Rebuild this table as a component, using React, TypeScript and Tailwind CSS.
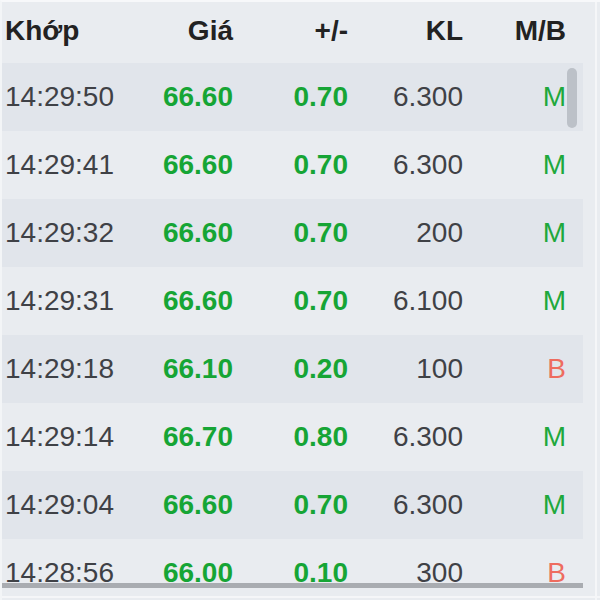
import React from 'react'

interface Trade {
  time: string
  price: string
  change: string
  volume: string
  side: 'M' | 'B'
}

const trades: Trade[] = [
  { time: '14:29:50', price: '66.60', change: '0.70', volume: '6.300', side: 'M' },
  { time: '14:29:41', price: '66.60', change: '0.70', volume: '6.300', side: 'M' },
  { time: '14:29:32', price: '66.60', change: '0.70', volume: '200', side: 'M' },
  { time: '14:29:31', price: '66.60', change: '0.70', volume: '6.100', side: 'M' },
  { time: '14:29:18', price: '66.10', change: '0.20', volume: '100', side: 'B' },
  { time: '14:29:14', price: '66.70', change: '0.80', volume: '6.300', side: 'M' },
  { time: '14:29:04', price: '66.60', change: '0.70', volume: '6.300', side: 'M' },
  { time: '14:28:56', price: '66.00', change: '0.10', volume: '300', side: 'B' },
]

export default function App() {
  return (
    <div className="relative w-[600px] h-[600px] overflow-hidden bg-[#e9ecf0] border-l-2 border-t-2 border-l-[#f3f5f7] border-t-[#f7f8fa] font-['Liberation_Sans',Arial,sans-serif] text-[28px]">
      {/* header */}
      <div className="flex h-[61px] items-center pb-1 font-bold text-[#222]">
        <div className="w-[138px] pl-[3px]">Khớp</div>
        <div className="w-[93px] text-right">Giá</div>
        <div className="w-[115px] text-right">+/-</div>
        <div className="w-[115px] text-right">KL</div>
        <div className="w-[103px] text-right">M/B</div>
      </div>

      {/* rows */}
      <div className="h-[520px] w-[581px] overflow-hidden">
        {trades.map((t, i) => (
          <div
            key={t.time}
            className={`flex h-[68px] items-center ${i % 2 === 0 ? 'bg-[#e1e5eb]' : 'bg-[#e9ecf0]'}`}
          >
            <div className="w-[138px] pl-[3px] text-[#3f4146]">{t.time}</div>
            <div className="w-[93px] text-right font-bold text-[#16a535]">{t.price}</div>
            <div className="w-[115px] text-right font-bold text-[#16a535]">{t.change}</div>
            <div className="w-[115px] text-right text-[#3f4146]">{t.volume}</div>
            <div className={`w-[103px] text-right ${t.side === 'M' ? 'text-[#1fa83c]' : 'text-[#ee6c5f]'}`}>
              {t.side}
            </div>
          </div>
        ))}
      </div>

      {/* vertical scroll thumb */}
      <div className="absolute left-[565px] top-[66px] h-[60px] w-[10px] rounded-full bg-[#bcc1c8]" />
      {/* horizontal scrollbar */}
      <div className="absolute left-0 top-[581px] h-[5px] w-[581px] bg-[#a9acb1]" />
      {/* right border */}
      <div className="absolute right-[3px] top-0 h-full w-[2px] bg-[#f5f6f8]" />
      {/* bottom border */}
      <div className="absolute bottom-[2px] left-0 h-[2px] w-full bg-[#f5f6f8]" />
    </div>
  )
}
